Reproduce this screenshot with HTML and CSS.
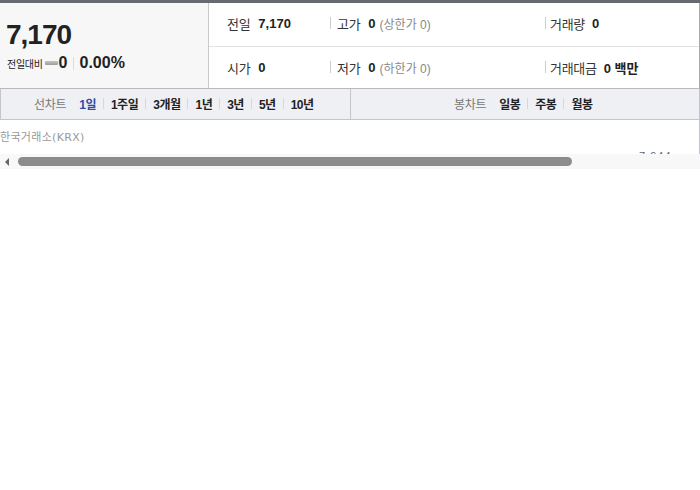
FILE: index.html
```html
<!DOCTYPE html>
<html lang="ko">
<head>
<meta charset="utf-8">
<link rel="stylesheet" href="styles.css">
</head>
<body>
<div class="topline"></div>
<div class="summary">
  <div class="now">
    <div class="price">7,170</div>
    <div class="change">
      <span class="lbl">전일대비</span><span class="flat"></span><span class="num">0</span><span class="sep"></span><span class="num">0.00%</span>
    </div>
  </div>
  <div class="table">
    <div class="row">
      <div class="cell c1"><span class="k">전일</span><b>7,170</b></div>
      <div class="cell c2"><span class="bar"></span><span class="k">고가</span><b>0</b><span class="sub">(상한가 0)</span></div>
      <div class="cell c3"><span class="bar"></span><span class="k">거래량</span><b>0</b></div>
    </div>
    <div class="row">
      <div class="cell c1"><span class="k">시가</span><b>0</b></div>
      <div class="cell c2"><span class="bar"></span><span class="k">저가</span><b>0</b><span class="sub">(하한가 0)</span></div>
      <div class="cell c3"><span class="bar"></span><span class="k">거래대금</span><b>0 백만</b></div>
    </div>
  </div>
</div>
<div class="tabs">
  <div class="tabgroup">
    <span class="tt">선차트</span>
    <span class="tab on">1일</span><span class="ts"></span>
    <span class="tab">1주일</span><span class="ts"></span>
    <span class="tab">3개월</span><span class="ts"></span>
    <span class="tab">1년</span><span class="ts"></span>
    <span class="tab">3년</span><span class="ts"></span>
    <span class="tab">5년</span><span class="ts"></span>
    <span class="tab">10년</span>
  </div>
  <div class="tabgroup right">
    <span class="tt">봉차트</span>
    <span class="tab">일봉</span><span class="ts"></span>
    <span class="tab">주봉</span><span class="ts"></span>
    <span class="tab">월봉</span>
  </div>
</div>
<div class="chart">
  <div class="src">한국거래소(KRX)</div>
  <div class="ylabel">7,944</div>
</div>
<div class="scroll">
  <span class="arrow"></span>
  <span class="thumb"></span>
</div>
</body>
</html>
```
FILE: styles.css
```css
* { box-sizing: border-box; }
body {
  margin: 0;
  width: 700px;
  background: #fff;
  font-family: "Liberation Sans", "Noto Sans CJK KR", sans-serif;
  color: #333;
}
.topline { height: 3px; background: #676a70; }
.summary {
  display: flex;
  height: 86px;
  border-bottom: 1px solid #b9b9b9;
  border-right: 1px solid #a9a9a9;
}
.now {
  width: 209px;
  background: #f7f7f7;
  border-right: 1px solid #c9c9c9;
  padding: 15px 0 0 6px;
}
.price {
  font-size: 28px;
  font-weight: bold;
  letter-spacing: -1px;
  color: #222;
  line-height: 34px;
}
.change {
  display: flex;
  align-items: center;
  margin-top: 1px;
  height: 20px;
}
.change .lbl { font-size: 10px; letter-spacing: -0.3px; color: #222; margin-left: 1px; }
.flat {
  width: 13px; height: 4px; margin: 0 1px 0 2px;
  background: linear-gradient(#c4c4c4, #9c9c9c);
  border-radius: 1px;
}
.change .num { font-size: 16px; font-weight: bold; color: #222; }
.change .sep { width: 1px; height: 13px; background: #ddd; margin: 0 6px 0 5px; }
.table { flex: 1; display: flex; flex-direction: column; }
.row { flex: 1; display: flex; align-items: center; padding-bottom: 3px; }
.row + .row { border-top: 1px solid #e3e3e3; padding-bottom: 1px; }
.cell { display: flex; align-items: center; font-size: 13px; }
.c1 { width: 121px; padding-left: 18px; }
.c2 { width: 215px; }
.c3 { flex: 1; }
.cell .k { color: #333; margin-right: 8px; letter-spacing: -0.3px; }
.cell b { color: #222; font-weight: bold; }
.cell .sub { color: #888; font-size: 12px; margin-left: 4px; }
.c3 .k { margin-right: 7px; }
.bar { width: 1px; height: 12px; background: #ccc; margin-right: 6px; }
.c3 .bar { margin-right: 4px; }
.tabs {
  display: flex;
  height: 31px;
  background: #eff0f4;
  border: 1px solid #c3c5cb;
  border-top: none;
}
.tabgroup {
  flex: 1;
  display: flex;
  align-items: center;
  justify-content: center;
  font-size: 12px;
  padding: 0 3px 1px 0;
}
.tabgroup.right { border-left: 1px solid #c3c5cb; }
.tt { color: #777; margin-right: 13px; letter-spacing: -0.3px; }
.tab { color: #222; font-weight: bold; letter-spacing: -0.5px; }
.tab.on { color: #2b4ea3; }
.ts { width: 1px; height: 11px; background: #d6d7dc; margin: 0 7px; }
.chart {
  position: relative;
  height: 34px;
  overflow: hidden;
  border-right: 1px solid #c3c5cb;
}
.src {
  font-family: "DejaVu Sans", "Noto Sans CJK KR", sans-serif;
  font-size: 11px;
  color: #999;
  letter-spacing: 0.3px;
  margin-top: 11px;
  line-height: 14px;
}
.ylabel {
  position: absolute;
  left: 639px;
  top: 30px;
  font-size: 11px;
  color: #666;
  letter-spacing: 1px;
}
.scroll {
  display: flex;
  align-items: center;
  height: 15px;
  background: #f8f8f8;
}
.arrow {
  width: 0; height: 0;
  border-top: 4px solid transparent;
  border-bottom: 4px solid transparent;
  border-right: 4px solid #666;
  margin-left: 5px;
}
.thumb {
  width: 554px;
  height: 9px;
  margin-left: 9px;
  background: #8c8c8c;
  border-radius: 5px;
}
```
